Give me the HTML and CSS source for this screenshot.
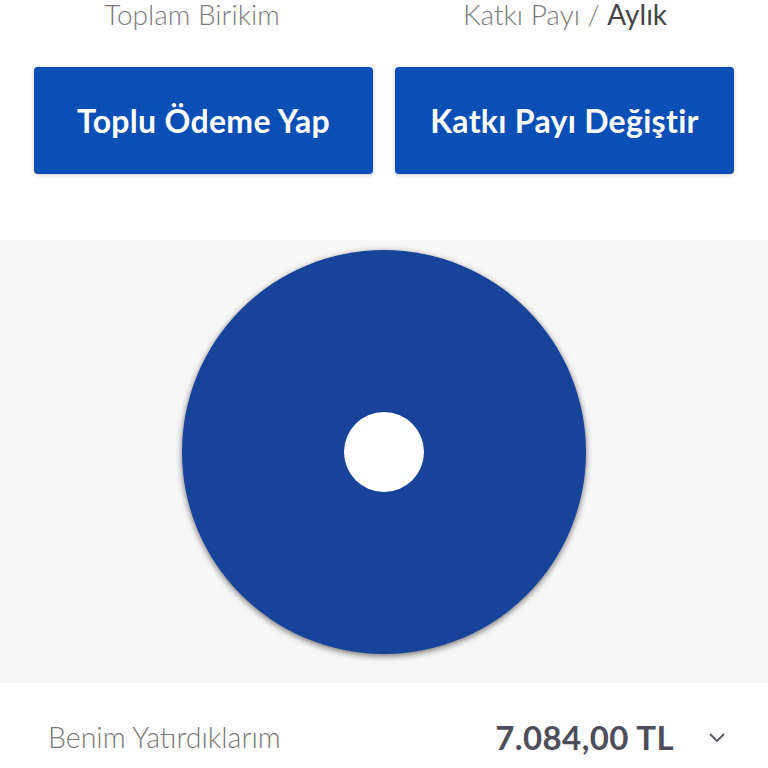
FILE: index.html
```html
<!DOCTYPE html>
<html lang="tr">
<head>
    <meta charset="UTF-8">
    <meta name="viewport" content="width=device-width, initial-scale=1.0">
    <title>Birikim</title>
    <link rel="stylesheet" href="styles.css">
</head>
<body>

    <div class="labels">
        <div class="label">Toplam Birikim</div>
        <div class="label label-right">Katkı Payı / <span class="strong">Aylık</span></div>
    </div>

    <div class="actions">
        <button class="action-btn">Toplu Ödeme Yap</button>
        <button class="action-btn">Katkı Payı Değiştir</button>
    </div>

    <div class="chart">
        <div class="donut">
            <div class="donut-hole"></div>
        </div>
    </div>

    <div class="summary">
        <div class="summary-title">Benim Yatırdıklarım</div>
        <div class="summary-value">7.084,00 TL</div>
        <svg class="chevron" width="18" height="12" viewBox="0 0 18 12">
            <polyline points="2,3 9,10 16,3" fill="none" stroke="#555560" stroke-width="1.8"/>
        </svg>
    </div>

</body>
</html>
```

FILE: styles.css
```css
body {
    margin: 0;
    padding: 0;
    background-color: #ffffff;
    font-family: Lato, "Open Sans", sans-serif;
}

.labels {
    display: grid;
    grid-template-columns: 1fr 1fr;
    height: 30px;
}

.label {
    font-size: 28px;
    font-weight: 300;
    line-height: 28px;
    color: #7a7a7a;
    text-align: center;
}

.label-right {
    margin-left: -22px;
}

.label .strong {
    color: #444;
    font-weight: 400;
}

.actions {
    display: grid;
    grid-template-columns: 1fr 1fr;
    gap: 22px;
    padding: 0 34px;
    margin-top: 37px;
}

.action-btn {
    height: 107px;
    background-color: #0a4fb5;
    color: white;
    border: none;
    border-radius: 4px;
    box-shadow: 0px 1px 4px rgba(0, 0, 0, 0.2);
    font-family: Lato, "Open Sans", sans-serif;
    font-size: 32px;
    font-weight: 700;
    letter-spacing: 0.3px;
}

.chart {
    margin-top: 66px;
    height: 443px;
    background-color: #f7f7f7;
    display: flex;
    justify-content: center;
    align-items: flex-start;
}

.donut {
    margin-top: 10px;
    width: 404px;
    height: 404px;
    border-radius: 50%;
    background-color: #17449a;
    box-shadow: 0px 2px 6px rgba(0, 0, 0, 0.55);
    display: flex;
    align-items: center;
    justify-content: center;
}

.donut-hole {
    width: 80px;
    height: 80px;
    border-radius: 50%;
    background-color: white;
}

.summary {
    display: flex;
    align-items: center;
    height: 108px;
    padding: 0 42px 0 48px;
}

.summary-title {
    flex: 1;
    font-size: 28.5px;
    font-weight: 300;
    color: #777;
}

.summary-value {
    font-size: 33px;
    font-weight: 700;
    letter-spacing: 0.4px;
    color: #4e4e5a;
    margin-right: 34px;
}
```
